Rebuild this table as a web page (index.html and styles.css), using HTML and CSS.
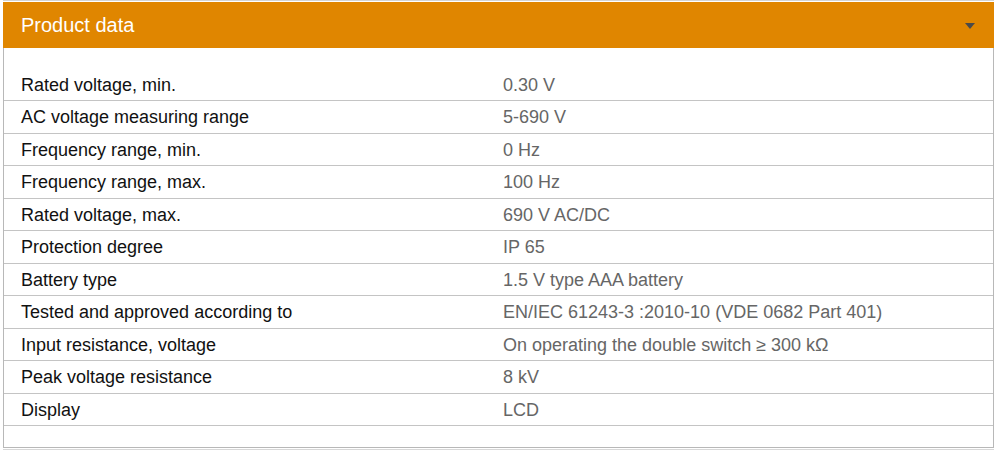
FILE: index.html
```
<!DOCTYPE html>
<html lang="en">
<head>
<meta charset="utf-8">
<title>Product data</title>
<link rel="stylesheet" href="styles.css">
</head>
<body>
<div class="outer">
  <section class="panel">
    <header class="panel-head">
      <h2 class="panel-title">Product data</h2>
      <span class="caret"></span>
    </header>
    <div class="rows">
      <div class="row"><span class="label">Rated voltage, min.</span><span class="value">0.30 V</span></div>
      <div class="row"><span class="label">AC voltage measuring range</span><span class="value">5-690 V</span></div>
      <div class="row"><span class="label">Frequency range, min.</span><span class="value">0 Hz</span></div>
      <div class="row"><span class="label">Frequency range, max.</span><span class="value">100 Hz</span></div>
      <div class="row"><span class="label">Rated voltage, max.</span><span class="value">690 V AC/DC</span></div>
      <div class="row"><span class="label">Protection degree</span><span class="value">IP 65</span></div>
      <div class="row"><span class="label">Battery type</span><span class="value">1.5 V type AAA battery</span></div>
      <div class="row"><span class="label">Tested and approved according to</span><span class="value">EN/IEC 61243-3 :2010-10 (VDE 0682 Part 401)</span></div>
      <div class="row"><span class="label">Input resistance, voltage</span><span class="value">On operating the double switch ≥ 300 kΩ</span></div>
      <div class="row"><span class="label">Peak voltage resistance</span><span class="value">8 kV</span></div>
      <div class="row"><span class="label">Display</span><span class="value">LCD</span></div>
    </div>
  </section>
</div>
</body>
</html>
```
FILE: styles.css
```
html, body {
  margin: 0;
  padding: 0;
  background: #fff;
}
body {
  font-family: "Liberation Sans", Arial, sans-serif;
  width: 996px;
  height: 450px;
  overflow: hidden;
}
.outer {
  margin: 0 2px 0 3px;
  border-top: 1px solid #d4d4d4;
  border-bottom: 1px solid #d8d8d8;
}
.panel {
  margin-top: 1px;
  margin-bottom: 1px;
  border-left: 1px solid #b8b8b8;
  border-right: 1px solid #b8b8b8;
  border-bottom: 1px solid #b8b8b8;
}
.panel-head {
  height: 46px;
  background: #e08600;
  display: flex;
  align-items: center;
  justify-content: space-between;
  padding: 0 19px 0 17px;
  margin: 0 -1px;
  box-sizing: border-box;
}
.panel-title {
  margin: 0;
  font-weight: normal;
  font-size: 20px;
  color: #fff;
  padding-left: 1px;
  padding-top: 1px;
}
.caret {
  width: 0;
  height: 0;
  border-left: 5px solid transparent;
  border-right: 5px solid transparent;
  border-top: 6px solid #4a4a4a;
  margin-top: 1px;
}
.rows {
  padding: 20.5px 0 21px;
}
.row {
  display: grid;
  grid-template-columns: 482px 1fr;
  padding-left: 17px;
  padding-top: 2px;
  height: 32.5px;
  box-sizing: border-box;
  border-bottom: 1px solid #c4c4c4;
  align-items: center;
  font-size: 18px;
}
.label {
  color: #111;
}
.value {
  color: #666;
}
```
